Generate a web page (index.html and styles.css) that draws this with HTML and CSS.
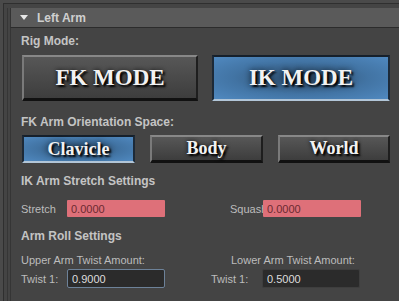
FILE: index.html
```html
<!DOCTYPE html>
<html lang="en">

<head>
    <meta charset="UTF-8">
    <title>Left Arm</title>
    <link rel="stylesheet" href="styles.css">
</head>

<body>

    <div class="scroll">
        <div class="frame">
            <div class="frame-header">
                <span class="arrow"></span>
                <span class="frame-title">Left Arm</span>
            </div>
            <div class="frame-body">
                <p class="section rig-label">Rig Mode:</p>
                <div class="mode-row">
                    <a href="#" class="btn btn-big">FK MODE</a>
                    <a href="#" class="btn btn-big active">IK MODE</a>
                </div>

                <p class="section orient-label">FK Arm Orientation Space:</p>
                <div class="space-row">
                    <a href="#" class="btn btn-small active">Clavicle</a>
                    <a href="#" class="btn btn-small">Body</a>
                    <a href="#" class="btn btn-small">World</a>
                </div>

                <p class="section stretch-label">IK Arm Stretch Settings</p>
                <div class="field-row stretch-row">
                    <label class="lbl lbl-first">Stretch</label>
                    <input type="text" class="ipt ipt-pink" value="0.0000">
                    <label class="lbl lbl-squash">Squash</label>
                    <input type="text" class="ipt ipt-pink" value="0.0000">
                </div>

                <p class="section roll-label">Arm Roll Settings</p>
                <div class="twist-head">
                    <span class="lbl upper">Upper Arm Twist Amount:</span>
                    <span class="lbl">Lower Arm Twist Amount:</span>
                </div>
                <div class="field-row twist-row">
                    <label class="lbl lbl-first">Twist 1:</label>
                    <input type="text" class="ipt ipt-dark focus" value="0.9000">
                    <label class="lbl lbl-twist2">Twist 1:</label>
                    <input type="text" class="ipt ipt-dark" value="0.5000">
                </div>
            </div>
        </div>
    </div>

</body>

</html>
```

FILE: styles.css
```css
* {
    box-sizing: border-box;
}

body {
    margin: 0;
    width: 399px;
    height: 301px;
    overflow: hidden;
    background-color: #4a4a4a;
    font-family: "Liberation Sans", Arial, sans-serif;
    font-size: 11px;
    color: #bdbdbd;
}

p {
    margin: 0;
}

.scroll {
    margin-left: 3px;
    margin-top: 3px;
    height: 298px;
    border-left: 1px solid #2f2f2f;
    border-top: 1px solid #2f2f2f;
    background-color: #444;
    padding-left: 3px;
    padding-top: 4px;
}

.frame {
    display: flex;
    flex-direction: column;
    height: 100%;
    border-left: 1px solid #363636;
    padding-left: 2px;
}

.frame-header {
    display: flex;
    align-items: center;
    flex: none;
    height: 20px;
    background-color: #5a5a5a;
    border-bottom: 1px solid #2c2c2c;
    border-left: 1px solid #333;
}

.arrow {
    width: 0;
    height: 0;
    margin-left: 9px;
    border-left: 4px solid transparent;
    border-right: 4px solid transparent;
    border-top: 5px solid #e6e6e6;
}

.frame-title {
    margin-left: 9px;
    font-weight: bold;
    font-size: 12px;
    color: #cfcfcf;
}

.frame-body {
    flex: 1;
    min-height: 0;
    overflow: hidden;
    border-left: 1px solid #353535;
    padding-left: 10px;
    padding-right: 9px;
    padding-top: 6px;
}

.section {
    height: 14px;
    line-height: 14px;
    font-weight: bold;
    font-size: 12px;
    color: #c4c4c4;
}

.mode-row {
    display: grid;
    grid-template-columns: 176px 178px;
    column-gap: 14px;
    margin-top: 7px;
    padding-left: 1px;
}

.btn {
    display: flex;
    align-items: center;
    justify-content: center;
    text-decoration: none;
    font-family: "Liberation Serif", "Times New Roman", serif;
    font-weight: bold;
    color: #f2f2f2;
    text-shadow: 2px 2px 2px #000, 0 0 4px #111;
    background: linear-gradient(#575757, #3d3d3d);
    border-top: 2px solid #888;
    border-left: 2px solid #7a7a7a;
    border-right: 2px solid #1e1e1e;
    border-bottom: 3px solid #111;
}

.btn.active {
    background: radial-gradient(ellipse at center, #2e4d6c 0%, #4274a4 55%, #5089c0 100%);
    border-top: 2px solid #16202b;
    border-left: 2px solid #1d2a38;
    border-right: 2px solid #1d2a38;
    border-bottom: 2px solid #b2c6d8;
    text-shadow: 2px 2px 2px #000, 0 0 6px #0b1622;
}

.btn-big {
    height: 46px;
    font-size: 23px;
}

.orient-label {
    margin-top: 14px;
}

.space-row {
    display: grid;
    grid-template-columns: 113px 113px 112px;
    column-gap: 15px;
    margin-top: 6px;
    padding-left: 1px;
}

.btn-small {
    height: 28px;
    font-size: 18px;
}

.stretch-label {
    margin-top: 11px;
}

.field-row {
    display: flex;
    align-items: center;
}

.stretch-row {
    margin-top: 12px;
    height: 17px;
}

.lbl {
    color: #bcbcbc;
    font-size: 11px;
    white-space: nowrap;
}

.lbl-first {
    width: 46px;
}

/* the label is narrower than its word, as in the tool */
.lbl-squash {
    width: 33px;
    margin-left: 65px;
    overflow: hidden;
}

.ipt {
    width: 98px;
    padding: 0 0 0 4px;
    font-family: "Liberation Sans", Arial, sans-serif;
    font-size: 11px;
    outline: none;
}

.ipt-pink {
    height: 17px;
    border: 0;
    border-radius: 1px;
    background-color: #de7079;
    color: #6b2a31;
}

.roll-label {
    margin-top: 12px;
}

.twist-head {
    display: flex;
    margin-top: 10px;
    height: 14px;
    line-height: 14px;
}

.upper {
    width: 210px;
}

.twist-row {
    margin-top: 2px;
    height: 19px;
}

.ipt-dark {
    height: 19px;
    background-color: #2b2b2b;
    border: 1px solid #3e3e3e;
    border-radius: 2px;
    color: #dedede;
}

.ipt-dark.focus {
    border: 1px solid #6d8299;
}

.lbl-twist2 {
    width: 51px;
    margin-left: 46px;
}
```
